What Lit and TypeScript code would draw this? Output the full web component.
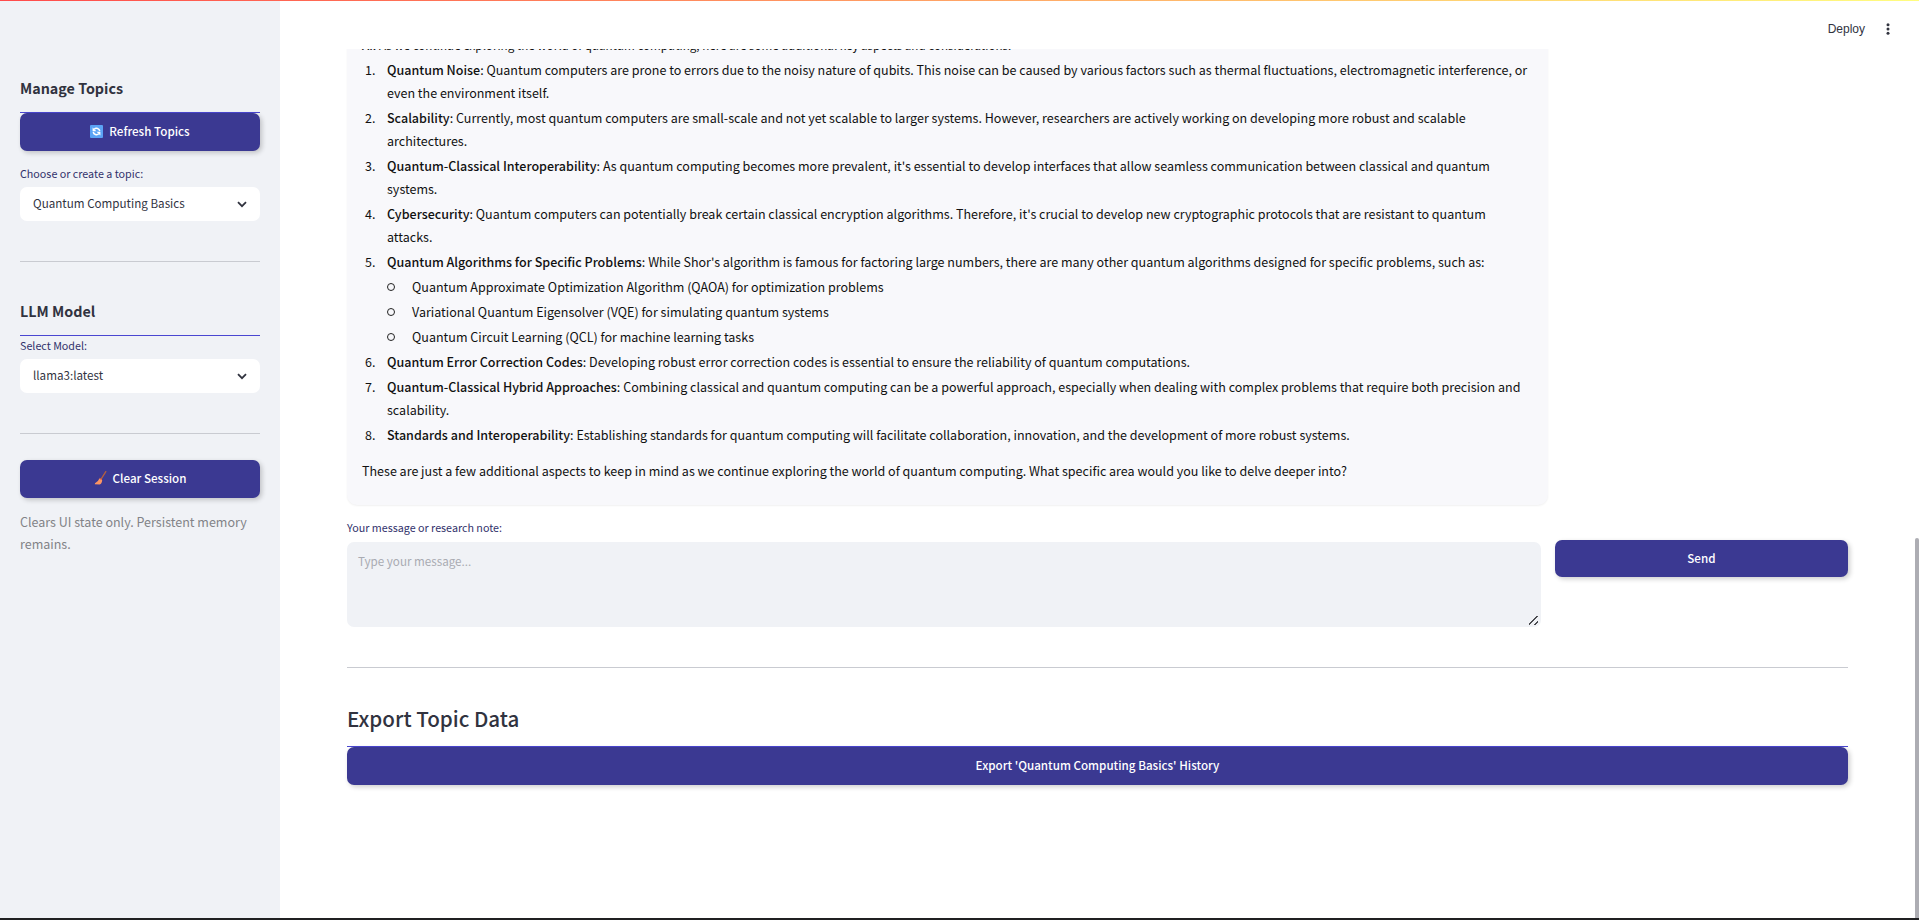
import { LitElement, html, css, svg } from "lit";
import { customElement, state } from "lit/decorators.js";

interface Point {
  title: string;
  text: string;
  children?: string[];
}

const POINTS: Point[] = [
  {
    title: "Quantum Noise",
    text: "Quantum computers are prone to errors due to the noisy nature of qubits. This noise can be caused by various factors such as thermal fluctuations, electromagnetic interference, or even the environment itself.",
  },
  {
    title: "Scalability",
    text: "Currently, most quantum computers are small-scale and not yet scalable to larger systems. However, researchers are actively working on developing more robust and scalable architectures.",
  },
  {
    title: "Quantum-Classical Interoperability",
    text: "As quantum computing becomes more prevalent, it's essential to develop interfaces that allow seamless communication between classical and quantum systems.",
  },
  {
    title: "Cybersecurity",
    text: "Quantum computers can potentially break certain classical encryption algorithms. Therefore, it's crucial to develop new cryptographic protocols that are resistant to quantum attacks.",
  },
  {
    title: "Quantum Algorithms for Specific Problems",
    text: "While Shor's algorithm is famous for factoring large numbers, there are many other quantum algorithms designed for specific problems, such as:",
    children: [
      "Quantum Approximate Optimization Algorithm (QAOA) for optimization problems",
      "Variational Quantum Eigensolver (VQE) for simulating quantum systems",
      "Quantum Circuit Learning (QCL) for machine learning tasks",
    ],
  },
  {
    title: "Quantum Error Correction Codes",
    text: "Developing robust error correction codes is essential to ensure the reliability of quantum computations.",
  },
  {
    title: "Quantum-Classical Hybrid Approaches",
    text: "Combining classical and quantum computing can be a powerful approach, especially when dealing with complex problems that require both precision and scalability.",
  },
  {
    title: "Standards and Interoperability",
    text: "Establishing standards for quantum computing will facilitate collaboration, innovation, and the development of more robust systems.",
  },
];

const chevron = svg`<path d="M1 1.2 L5 5.2 L9 1.2" fill="none" stroke="#31333f" stroke-width="1.8"/>`;

@customElement("app-root")
export class AppRoot extends LitElement {
  @state() private draft = "";

  static styles = css`
    :host {
      display: grid;
      grid-template-columns: 280px minmax(0, 1fr);
      height: 100vh;
      box-sizing: border-box;
      position: relative;
      overflow: hidden;
      border-bottom: 2px solid #202022;
      background: #fff;
      color: #31333f;
      font-family: "Source Sans Pro", "Noto Sans CJK JP", sans-serif;
      font-size: 14px;
      font-size-adjust: 0.486;
      line-height: 23px;
    }
    * {
      box-sizing: border-box;
    }
    .decoration {
      position: absolute;
      inset: 0 0 auto 0;
      height: 1px;
      z-index: 2;
      background: linear-gradient(90deg, #ff4b4b, #fffd80);
    }
    .sidebar {
      background: #f0f2f6;
      padding: 74px 20px 0;
      display: flex;
      flex-direction: column;
    }
    .side-title {
      margin: 0;
      padding-bottom: 11px;
      border-bottom: 1px solid #4a47d1;
      font-size: 16px;
      font-weight: 600;
      line-height: 27px;
    }
    .primary {
      display: flex;
      align-items: center;
      justify-content: center;
      gap: 6px;
      width: 100%;
      height: 38px;
      margin: 0;
      padding: 0 12px 2px;
      border: 0;
      border-radius: 7px;
      background: #3b3992;
      color: #fff;
      font: inherit;
      font-size-adjust: inherit;
      font-size: 13px;
      font-weight: 500;
      box-shadow: 2px 2px 5px rgba(0, 0, 0, 0.2);
      cursor: pointer;
    }
    .label {
      display: block;
      font-size: 12px;
      line-height: 20px;
      color: #31316b;
    }
    .side-label-gap {
      margin-top: 13px;
    }
    .picker {
      display: grid;
      align-items: center;
      margin-top: 3px;
    }
    .picker select {
      grid-area: 1 / 1;
      appearance: none;
      width: 100%;
      height: 34px;
      border: 0;
      border-radius: 7px;
      padding: 0 32px 2px 13px;
      background: #fff;
      color: #31333f;
      font: inherit;
      font-size-adjust: inherit;
      font-size: 13px;
    }
    .picker svg {
      grid-area: 1 / 1;
      justify-self: end;
      margin-right: 13px;
      pointer-events: none;
    }
    .rule {
      width: 100%;
      height: 1px;
      border: 0;
      margin: 0;
      background: #c9cbd1;
    }
    .side-rule {
      margin-top: 40px;
    }
    .model-title {
      margin-top: 35px;
    }
    .clear {
      margin-top: 26px;
    }
    .caption {
      margin: 13px 0 0;
      line-height: 22px;
      color: #828387;
    }
    .main {
      display: grid;
      grid-template-rows: 49px minmax(0, 1fr);
      min-height: 0;
    }
    .header {
      display: flex;
      align-items: center;
      justify-content: flex-end;
      gap: 16px;
      padding: 8px 24px 0 0;
    }
    .plain {
      border: 0;
      padding: 0;
      background: none;
      color: #31333f;
      font-family: "Liberation Sans", Arial, sans-serif;
      font-size: 12px;
      font-size-adjust: none;
      line-height: 20px;
      cursor: pointer;
    }
    .menu {
      display: grid;
      place-items: center;
      width: 14px;
      height: 20px;
    }
    .scroller {
      display: flex;
      flex-direction: column;
      justify-content: flex-end;
      overflow: hidden;
      padding: 0 71px 133px 67px;
    }
    .message {
      flex: none;
      width: 80%;
      padding: 14px 15px 23px;
      border-radius: 10px;
      background: #f8f8fb;
      color: #111;
      box-shadow: 0 1px 2px rgba(0, 0, 0, 0.06);
    }
    .message p {
      margin: 0;
    }
    .message .lead {
      font-size: 13px;
    }
    .message strong {
      font-weight: 500;
    }
    .points {
      margin: 0 0 13px;
      padding: 0;
      list-style: none;
      display: grid;
      gap: 2px;
      padding-top: 1px;
      counter-reset: point;
    }
    .point {
      display: grid;
      grid-template-columns: 12px minmax(0, 1fr);
      column-gap: 10px;
      padding-left: 3px;
      counter-increment: point;
    }
    .point::before {
      content: counter(point) ".";
    }
    .subpoints {
      margin: 2px 0 0;
      padding: 0;
      list-style: none;
      display: grid;
      gap: 2px;
    }
    .subpoint {
      display: flex;
      align-items: center;
      gap: 17px;
    }
    .subpoint::before {
      content: "";
      width: 6px;
      height: 6px;
      border: 1px solid #222;
      border-radius: 50%;
    }
    .compose {
      display: grid;
      grid-template-columns: calc(80% - 7px) minmax(0, 1fr);
      column-gap: 14px;
      margin-top: 13px;
    }
    .compose textarea {
      display: block;
      width: 100%;
      height: 85px;
      margin-top: 4px;
      padding: 8px 11px;
      border: 0;
      border-radius: 7px;
      background: #f0f2f6;
      color: #31333f;
      font: inherit;
      font-size-adjust: inherit;
      font-size: 13px;
      resize: vertical;
    }
    .compose textarea::placeholder {
      color: #a9abb2;
    }
    .compose textarea::-webkit-resizer {
      background: linear-gradient(
          135deg,
          transparent 44%,
          #4a4b50 44%,
          #4a4b50 54%,
          transparent 54%,
          transparent 74%,
          #4a4b50 74%,
          #4a4b50 84%,
          transparent 84%
        )
        3px 4px / 9px 9px no-repeat;
    }
    .send {
      margin-top: 22px;
      height: 37px;
      padding-bottom: 0;
    }
    .main-rule {
      flex: none;
      margin-top: 40px;
    }
    .export-title {
      margin: 31px 0 0;
      padding-bottom: 9px;
      border-bottom: 1px solid #4a47d1;
      font-size: 23px;
      font-weight: 500;
      line-height: 38px;
    }
    .export {
      flex: none;
    }
    .thumb {
      position: absolute;
      right: 0;
      bottom: 0;
      width: 4px;
      height: 380px;
      border-radius: 2px 2px 0 0;
      background: #adadb3;
    }
  `;

  render() {
    return html`
      <div class="decoration"></div>
      <aside class="sidebar">
        <h3 class="side-title">Manage Topics</h3>
        <button class="primary">
          <svg width="13" height="13" viewBox="0 0 13 13" aria-hidden="true">
            <rect width="13" height="13" rx="1" fill="#5ba3f5" />
            <path d="M9.8 6A3.4 3.4 0 0 0 4.2 4.2M3.2 7A3.4 3.4 0 0 0 8.8 8.8" fill="none" stroke="#fff" stroke-width="1.5" />
            <path d="M2.6 2.4V6.2H6.4ZM10.4 10.6V6.8H6.6Z" fill="#fff" />
          </svg>
          Refresh Topics
        </button>
        <label class="label side-label-gap" for="topic">Choose or create a topic:</label>
        <div class="picker">
          <select id="topic">
            <option>Quantum Computing Basics</option>
          </select>
          <svg width="10" height="7" viewBox="0 0 10 7" aria-hidden="true">${chevron}</svg>
        </div>
        <hr class="rule side-rule" />
        <h3 class="side-title model-title">LLM Model</h3>
        <label class="label" for="model">Select Model:</label>
        <div class="picker">
          <select id="model">
            <option>llama3:latest</option>
          </select>
          <svg width="10" height="7" viewBox="0 0 10 7" aria-hidden="true">${chevron}</svg>
        </div>
        <hr class="rule side-rule" />
        <button class="primary clear">
          <svg width="13" height="14" viewBox="0 0 13 14" aria-hidden="true">
            <path d="M11.8 0.6L7.4 7.6" stroke="#b4603f" stroke-width="1.3" stroke-linecap="round" />
            <path d="M5.4 7.4L8.2 9Q8 12.8 5.6 13.4L0.8 13.2L1 12.2Q4.2 10.6 5.4 7.4Z" fill="#fb9463" />
            <path d="M5.6 7.4L8 8.8" stroke="#e8663f" stroke-width="1" />
          </svg>
          Clear Session
        </button>
        <p class="caption">Clears UI state only. Persistent memory remains.</p>
      </aside>
      <main class="main">
        <header class="header">
          <button class="plain">Deploy</button>
          <button class="plain menu" aria-label="Main menu">
            <svg width="4" height="12" viewBox="0 0 4 12" fill="#31333f" aria-hidden="true">
              <circle cx="2" cy="1.8" r="1.5" />
              <circle cx="2" cy="6" r="1.5" />
              <circle cx="2" cy="10.2" r="1.5" />
            </svg>
          </button>
        </header>
        <div class="scroller">
          <article class="message">
            <p class="lead">
              <strong>AI:</strong> As we continue exploring the world of quantum computing, here are some additional
              key aspects and considerations:
            </p>
            <ol class="points">
              ${POINTS.map(
                (point) => html`<li class="point">
                  <div>
                    <strong>${point.title}</strong>: ${point.text}
                    ${point.children
                      ? html`<ul class="subpoints">
                          ${point.children.map((child) => html`<li class="subpoint">${child}</li>`)}
                        </ul>`
                      : ""}
                  </div>
                </li>`
              )}
            </ol>
            <p>
              These are just a few additional aspects to keep in mind as we continue exploring the world of quantum
              computing. What specific area would you like to delve deeper into?
            </p>
          </article>
          <div class="compose">
            <div>
              <label class="label" for="message">Your message or research note:</label>
              <textarea
                id="message"
                placeholder="Type your message..."
                .value=${this.draft}
                @input=${(e: Event) => (this.draft = (e.target as HTMLTextAreaElement).value)}
              ></textarea>
            </div>
            <button class="primary send">Send</button>
          </div>
          <hr class="rule main-rule" />
          <h2 class="export-title">Export Topic Data</h2>
          <button class="primary export">Export 'Quantum Computing Basics' History</button>
        </div>
      </main>
      <div class="thumb"></div>
    `;
  }
}
